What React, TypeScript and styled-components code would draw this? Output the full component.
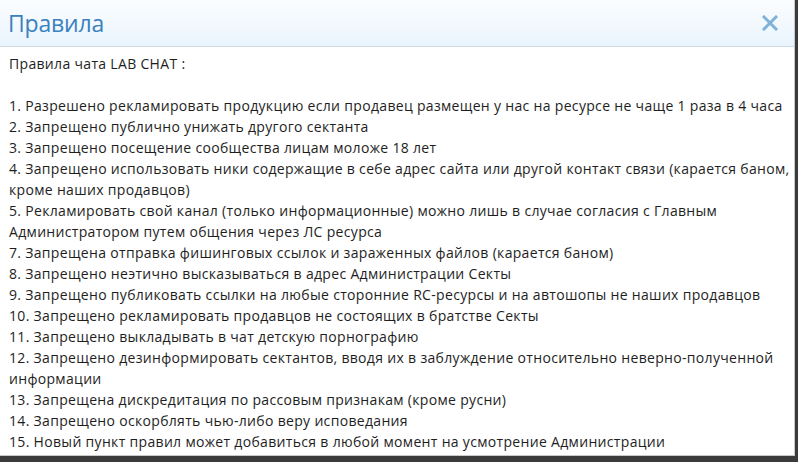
import React from 'react';
import styled, { createGlobalStyle } from 'styled-components';

const Global = createGlobalStyle`
  html, body {
    margin: 0;
    padding: 0;
    background: #3b3b3b;
    overflow: hidden;
  }
`;

const Dialog = styled.div`
  width: 795px;
  height: 456px;
  background: #ffffff;
  border-right: 1px solid #c9c9c9;
  border-bottom: 1px solid #c9c9c9;
  box-sizing: border-box;
  display: flex;
  flex-direction: column;
  font-family: 'Open Sans', 'Noto Sans', sans-serif;
`;

const Header = styled.div`
  height: 46px;
  flex: none;
  display: flex;
  align-items: center;
  justify-content: space-between;
  padding: 0 14px 0 8px;
  background: linear-gradient(to bottom, #fbfdff 0%, #eaf4fd 100%);
  border-bottom: 1px solid #cfdbe6;
`;

const Title = styled.h1`
  margin: 0;
  font-size: 23px;
  font-weight: 400;
  color: #3a81bd;
  letter-spacing: -0.2px;
`;

const Close = styled.button`
  border: 0;
  background: none;
  padding: 0;
  width: 20px;
  height: 20px;
  display: flex;
  align-items: center;
  justify-content: center;
  cursor: pointer;
`;

const Body = styled.div`
  padding: 6px 8px 0 9px;
  color: #1e1e1e;
  font-size: 14px;
  line-height: 21px;
  letter-spacing: 0.32px;
  white-space: nowrap;
`;

const Line = styled.div<{ $gap?: boolean }>`
  margin-bottom: ${(p) => (p.$gap ? '21px' : '0')};
`;

// each rule is split where the original wraps
const rules: string[][] = [
  ['1. Разрешено рекламировать продукцию если продавец размещен у нас на ресурсе не чаще 1 раза в 4 часа'],
  ['2. Запрещено публично унижать другого сектанта'],
  ['3. Запрещено посещение сообщества лицам моложе 18 лет'],
  [
    '4. Запрещено использовать ники содержащие в себе адрес сайта или другой контакт связи (карается баном,',
    'кроме наших продавцов)',
  ],
  [
    '5. Рекламировать свой канал (только информационные) можно лишь в случае согласия с Главным',
    'Администратором путем общения через ЛС ресурса',
  ],
  ['7. Запрещена отправка фишинговых ссылок и зараженных файлов (карается баном)'],
  ['8. Запрещено неэтично высказываться в адрес Администрации Секты'],
  ['9. Запрещено публиковать ссылки на любые сторонние RC-ресурсы и на автошопы не наших продавцов'],
  ['10. Запрещено рекламировать продавцов не состоящих в братстве Секты'],
  ['11. Запрещено выкладывать в чат детскую порнографию'],
  [
    '12. Запрещено дезинформировать сектантов, вводя их в заблуждение относительно неверно-полученной',
    'информации',
  ],
  ['13. Запрещена дискредитация по рассовым признакам (кроме русни)'],
  ['14. Запрещено оскорблять чью-либо веру исповедания'],
  ['15. Новый пункт правил может добавиться в любой момент на усмотрение Администрации'],
];

export default function App() {
  return (
    <>
      <Global />
      <Dialog>
        <Header>
          <Title>Правила</Title>
          <Close aria-label="Закрыть">
            <svg width="16" height="16" viewBox="0 0 16 16">
              <path d="M2 2 L14 14 M14 2 L2 14" stroke="#7fb1d9" strokeWidth="3" strokeLinecap="square" />
            </svg>
          </Close>
        </Header>
        <Body>
          <Line $gap>Правила чата LAB CHAT :</Line>
          {rules.map((r) => (
            <Line key={r[0]}>
              {r.map((part, i) => (
                <React.Fragment key={i}>
                  {i > 0 && <br />}
                  {part}
                </React.Fragment>
              ))}
            </Line>
          ))}
        </Body>
      </Dialog>
    </>
  );
}
